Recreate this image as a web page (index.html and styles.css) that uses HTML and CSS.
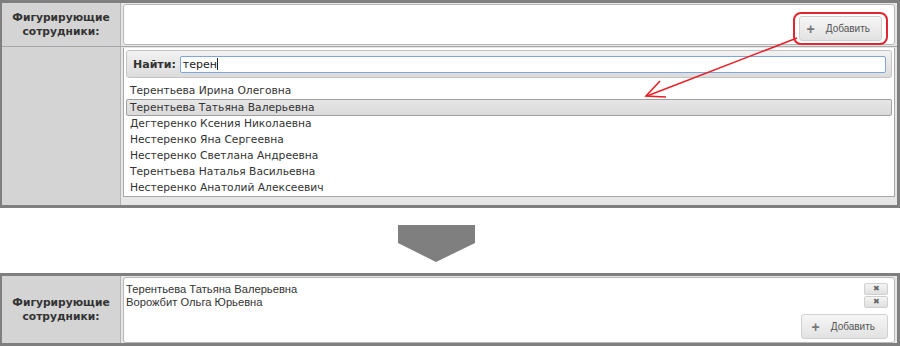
FILE: index.html
```html
<!DOCTYPE html>
<html lang="ru">
<head>
    <meta charset="UTF-8">
    <title>Фигурирующие сотрудники</title>
    <link rel="stylesheet" href="styles.css">
</head>
<body>
    <div class="page">
        <div class="panel panel-top">
            <div class="row row-head">
                <div class="label">Фигурирующие<br>сотрудники:</div>
                <div class="value">
                    <div class="box box-top">
                        <span class="add-wrap">
                            <span class="button"><span class="plus">+</span>Добавить</span>
                        </span>
                    </div>
                </div>
            </div>
            <div class="row row-list">
                <div class="label"></div>
                <div class="value">
                    <div class="dropdown">
                        <div class="search">
                            <span class="search-label">Найти:</span>
                            <span class="search-input">терен<span class="caret"></span></span>
                        </div>
                        <ul class="results">
                            <li>Терентьева Ирина Олеговна</li>
                            <li class="active">Терентьева Татьяна Валерьевна</li>
                            <li>Дегтеренко Ксения Николаевна</li>
                            <li>Нестеренко Яна Сергеевна</li>
                            <li>Нестеренко Светлана Андреевна</li>
                            <li>Терентьева Наталья Васильевна</li>
                            <li>Нестеренко Анатолий Алексеевич</li>
                        </ul>
                    </div>
                </div>
            </div>
            <svg class="pointer" width="900" height="208" viewBox="0 0 900 208">
                <line x1="797" y1="38" x2="647" y2="96" stroke="#e8202a" stroke-width="1.6"/>
                <polyline points="660,81 646,96 666,97" fill="none" stroke="#e8202a" stroke-width="1.6"/>
            </svg>
        </div>

        <div class="step">
            <svg width="78" height="38" viewBox="0 0 78 38">
                <polygon points="0,0 77,0 77,18 38,37 0,18" fill="#7f7f7f"/>
            </svg>
        </div>

        <div class="panel panel-bottom">
            <div class="row row-result">
                <div class="label">Фигурирующие<br>сотрудники:</div>
                <div class="value">
                    <div class="box box-result">
                        <div class="picked">
                            <div class="picked-row">Терентьева Татьяна Валерьевна<span class="remove">✖</span></div>
                            <div class="picked-row">Ворожбит Ольга Юрьевна<span class="remove">✖</span></div>
                        </div>
                        <div class="actions">
                            <span class="button"><span class="plus">+</span>Добавить</span>
                        </div>
                    </div>
                </div>
            </div>
        </div>
    </div>
</body>
</html>
```

FILE: styles.css
```css
body {
    margin: 0;
    background: #fff;
    font-family: Tahoma, "DejaVu Sans", sans-serif;
    font-size: 11px;
    color: #333;
}
.page {
    width: 900px;
}
.panel {
    position: relative;
    border: 3px solid #7f7f7f;
    border-left-width: 2px;
    background: #e6e6e6;
}
.row {
    display: flex;
}
.label {
    width: 118px;
    background: #d4d4d4;
    border-right: 1px solid #b4b4b4;
    display: flex;
    align-items: center;
    justify-content: center;
    text-align: center;
    font-weight: bold;
    font-size: 10.7px;
    line-height: 14px;
    color: #333;
}
.value {
    flex: 1;
    padding: 0 2px 0 2px;
}
.row-head {
    height: 43px;
    border-bottom: 1px solid #a8a8a8;
}
.row-head .value {
    padding-top: 1px;
}
.box {
    background: #fff;
    border: 1px solid #b8b8b8;
    border-radius: 3px;
}
.box-top {
    height: 39px;
    display: flex;
    justify-content: flex-end;
    align-items: flex-start;
    padding-right: 6px;
}
.add-wrap {
    margin-top: 7px;
    padding: 2px 4px;
    border: 2px solid #e02630;
    border-radius: 8px;
}
.button {
    display: inline-flex;
    align-items: center;
    height: 23px;
    padding: 0 11px 0 7px;
    background: linear-gradient(#f6f6f6, #e2e2e2);
    border: 1px solid #d0d0d0;
    border-radius: 3px;
    font-family: "Liberation Sans", Arial, sans-serif;
    font-size: 10px;
    color: #555;
}
.plus {
    font-weight: bold;
    font-size: 14px;
    color: #777;
    margin-right: 11px;
}
.row-list {
    height: 158px;
}
.row-list .value {
    padding-top: 1px;
}
.dropdown {
    background: #fff;
    border: 1px solid #a8a8a8;
    border-top: none;
    height: 146px;
    padding: 2px 2px 0 2px;
}
.search {
    display: flex;
    align-items: center;
    height: 26px;
    padding: 0 5px 0 6px;
    background: linear-gradient(#f2f2f2, #dcdcdc);
    border: 1px solid #c4c4c4;
    border-radius: 3px;
}
.search-label {
    font-weight: bold;
    margin-right: 4px;
    color: #333;
}
.search-input {
    flex: 1;
    height: 15px;
    line-height: 15px;
    padding-left: 2px;
    background: #fff;
    border: 1px solid #7fa6d6;
    border-radius: 2px;
    color: #222;
}
.caret {
    display: inline-block;
    width: 1px;
    height: 12px;
    background: #222;
    vertical-align: -2px;
}
.results {
    list-style: none;
    margin: 5px 0 0 0;
    padding: 0;
    font-size: 10.7px;
}
.results li {
    height: 16px;
    line-height: 16px;
    padding-left: 3px;
    border: 1px solid transparent;
    border-top: none;
    border-bottom: none;
    color: #333;
}
.results li.active {
    height: 15px;
    border: 1px solid #a0a0a0;
    border-radius: 2px;
    background: linear-gradient(#e6e6e6, #dadada);
}
.pointer {
    position: absolute;
    left: -2px;
    top: -3px;
    pointer-events: none;
}
.step {
    display: flex;
    justify-content: center;
    padding: 17px 0 10px 0;
    margin-left: -26px;
}
.row-result {
    height: 67px;
}
.row-result .value {
    padding: 1px 2px 2px 2px;
}
.box-result {
    height: 62px;
    display: flex;
    flex-direction: column;
    padding: 2px 6px 0 2px;
}
.picked {
    flex: 1;
    padding-top: 2px;
}
.picked-row {
    display: flex;
    justify-content: space-between;
    align-items: center;
    height: 13px;
    font-family: "Liberation Sans", Arial, sans-serif;
    font-size: 11.2px;
    color: #333;
}
.remove {
    width: 22px;
    height: 10px;
    line-height: 10px;
    font-size: 8px;
    text-align: center;
    color: #666;
    background: linear-gradient(#f4f4f4, #e0e0e0);
    border: 1px solid #cfcfcf;
    border-radius: 2px;
}
.actions {
    display: flex;
    justify-content: flex-end;
    padding-bottom: 3px;
}
.actions .button {
    height: 23px;
    padding: 0 12px 0 10px;
}
```
